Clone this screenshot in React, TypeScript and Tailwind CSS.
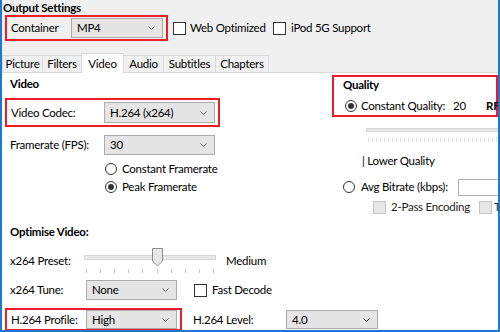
import React from 'react';

const Chevron = () => (
  <svg width="7" height="4" viewBox="0 0 7 4" className="shrink-0">
    <path d="M0.5 0.5 L3.5 3.5 L6.5 0.5" stroke="#606060" fill="none" strokeWidth="1" />
  </svg>
);

const Dropdown = ({ value, className }: { value: string; className: string }) => (
  <div className={`flex shrink-0 items-center justify-between border border-[#acacac] bg-[#e5e5e5] pl-[5px] pr-[7px] ${className}`}>
    <span>{value}</span>
    <Chevron />
  </div>
);

const Radio = ({ checked }: { checked?: boolean }) => (
  <span className="flex h-[12px] w-[12px] shrink-0 items-center justify-center rounded-full border border-[#333] bg-white">
    {checked && <span className="h-[6px] w-[6px] rounded-full bg-[#333]" />}
  </span>
);

const Checkbox = ({ disabled, className = '' }: { disabled?: boolean; className?: string }) =>
  disabled ? (
    <span className={`block h-[13px] w-[13px] shrink-0 border border-[#c6c6c6] bg-[#e6e6e6] ${className}`} />
  ) : (
    <span className={`block h-[13px] w-[13px] shrink-0 border border-[#333] bg-white ${className}`} />
  );

const tabs = [
  { label: 'Picture', w: 'w-[41px]' },
  { label: 'Filters', w: 'w-[40px]' },
  { label: 'Video', w: 'w-[43px]', active: true },
  { label: 'Audio', w: 'w-[41px]' },
  { label: 'Subtitles', w: 'w-[53px]' },
  { label: 'Chapters', w: 'w-[54px]' },
];

export default function App() {
  return (
    <div className="h-[332px] w-[500px] overflow-hidden border-x-2 border-b-2 border-[#1b79d1] bg-white font-['Lato',sans-serif] text-[11.5px] leading-[14px] tracking-[-0.25px] text-black whitespace-nowrap">
      {/* header */}
      <div className="h-[73px] bg-[#f0f0f0]">
        <div className="h-[14px] pl-[1px] pt-[1px] font-bold leading-[13px]">Output Settings</div>
        <div className="mt-[1px] flex items-center">
          <div className="ml-[3px] flex h-[26px] w-[163px] items-center border-2 border-[#ee1c25]">
            <span className="w-[64px] pl-[4px]">Container</span>
            <Dropdown value="MP4" className="h-[20px] w-[92px]" />
          </div>
          <Checkbox className="ml-[5px]" />
          <span className="ml-[4px] w-[83px]">Web Optimized</span>
          <Checkbox />
          <span className="ml-[5px]">iPod 5G Support</span>
        </div>
        {/* tabs */}
        <div className="mt-[12px] flex h-[20px] items-end border-b border-[#d9d9d9] pl-[1px]">
          {tabs.map((t) =>
            t.active ? (
              <div
                key={t.label}
                className={`relative z-10 -mb-px -ml-px flex h-[20px] items-center justify-center border border-b-0 border-[#d9d9d9] bg-white ${t.w}`}
              >
                {t.label}
              </div>
            ) : (
              <div
                key={t.label}
                className={`-ml-px flex h-[17px] items-center justify-center border border-b-0 border-[#d9d9d9] bg-[#f0f0f0] ${t.w}`}
              >
                {t.label}
              </div>
            )
          )}
        </div>
      </div>

      {/* top section */}
      <div className="flex h-[152px]">
        <div className="flex w-[330px] shrink-0 flex-col">
          <div className="ml-[8px] mt-[4px] h-[14px] font-bold">Video</div>
          <div className="ml-[3px] mt-[7px] flex h-[29px] w-[215px] items-center border-2 border-[#ee1c25]">
            <span className="w-[97px] pl-[4px]">Video Codec:</span>
            <Dropdown value="H.264 (x264)" className="h-[21px] w-[111px]" />
          </div>
          <div className="ml-[8px] mt-[8px] flex h-[20px] items-center">
            <span className="w-[94px]">Framerate (FPS):</span>
            <Dropdown value="30" className="h-[20px] w-[111px]" />
          </div>
          <div className="ml-[103px] mt-[5px] flex h-[18px] items-center gap-[5px]">
            <Radio />
            <span>Constant Framerate</span>
          </div>
          <div className="ml-[103px] flex h-[18px] items-center gap-[5px]">
            <Radio checked />
            <span>Peak Framerate</span>
          </div>
        </div>

        <div className="flex min-w-0 flex-1 flex-col">
          <div className="mt-[2px] h-[42px] w-[166px] shrink-0 border-2 border-[#ee1c25]">
            <div className="mt-[1px] pl-[9px] font-bold">Quality</div>
            <div className="mt-[6px] flex h-[16px] items-center pl-[11px]">
              <Radio checked />
              <span className="ml-[4px] w-[92px] shrink-0">Constant Quality:</span>
              <span className="w-[33px] shrink-0">20</span>
              <span className="font-bold">RF</span>
            </div>
          </div>
          <div className="ml-[34px] mt-[11px] h-[4px] w-[140px] shrink-0 border border-[#d6d6d6] bg-[#e7e7e7]" />
          <div className="ml-[36px] mt-[5px] flex h-[5px] w-[140px] shrink-0 gap-[3px]">
            {Array.from({ length: 36 }).map((_, i) => (
              <span key={i} className="h-[5px] w-px shrink-0 bg-[#e2e2e2]" />
            ))}
          </div>
          <div className="ml-[30px] mt-[12px] h-[14px]">| Lower Quality</div>
          <div className="ml-[11px] mt-[10px] flex h-[18px] items-center">
            <Radio />
            <span className="ml-[6px] w-[97px] shrink-0">Avg Bitrate (kbps):</span>
            <span className="block h-[17px] w-[60px] shrink-0 border border-[#acacac] bg-white" />
          </div>
          <div className="ml-[41px] mt-[4px] flex h-[14px] items-center">
            <Checkbox disabled />
            <span className="ml-[5px] w-[88px] shrink-0 text-[#222]">2-Pass Encoding</span>
            <Checkbox disabled />
            <span className="ml-[2px] text-[#222]">Turbo</span>
          </div>
        </div>
      </div>

      {/* optimise */}
      <div className="ml-[8px] h-[14px] font-bold">Optimise Video:</div>
      <div className="ml-[8px] mt-[8px] flex h-[26px] items-start">
        <span className="mt-[7px] w-[74px]">x264 Preset:</span>
        <div className="relative h-[26px] w-[132px]">
          <div className="mt-[8px] h-[5px] w-[132px] border border-[#d6d6d6] bg-[#e7e7e7]" />
          <div className="ml-[2px] mt-[9px] flex w-[128px] justify-between">
            {Array.from({ length: 10 }).map((_, i) => (
              <span key={i} className="h-[4px] w-px bg-[#c8c8c8]" />
            ))}
          </div>
          <svg width="11" height="19" viewBox="0 0 11 19" className="absolute left-[68px] top-[1px]">
            <path d="M0.5 0.5 H10.5 V13 L5.5 18 L0.5 13 Z" fill="#e8e8e8" stroke="#8f8f8f" />
          </svg>
        </div>
        <span className="ml-[10px] mt-[7px]">Medium</span>
      </div>
      <div className="ml-[8px] mt-[7px] flex h-[20px] items-center">
        <span className="w-[76px]">x264 Tune:</span>
        <Dropdown value="None" className="h-[20px] w-[91px]" />
        <Checkbox className="ml-[17px]" />
        <span className="ml-[5px]">Fast Decode</span>
      </div>
      <div className="ml-[3px] mt-[8px] flex items-center">
        <div className="flex h-[23px] w-[177px] items-center border-2 border-[#ee1c25]">
          <span className="w-[79px] pl-[4px]">H.264 Profile:</span>
          <Dropdown value="High" className="h-[19px] w-[91px]" />
        </div>
        <span className="ml-[11px] w-[93px]">H.264 Level:</span>
        <Dropdown value="4.0" className="h-[19px] w-[92px]" />
      </div>
    </div>
  );
}
